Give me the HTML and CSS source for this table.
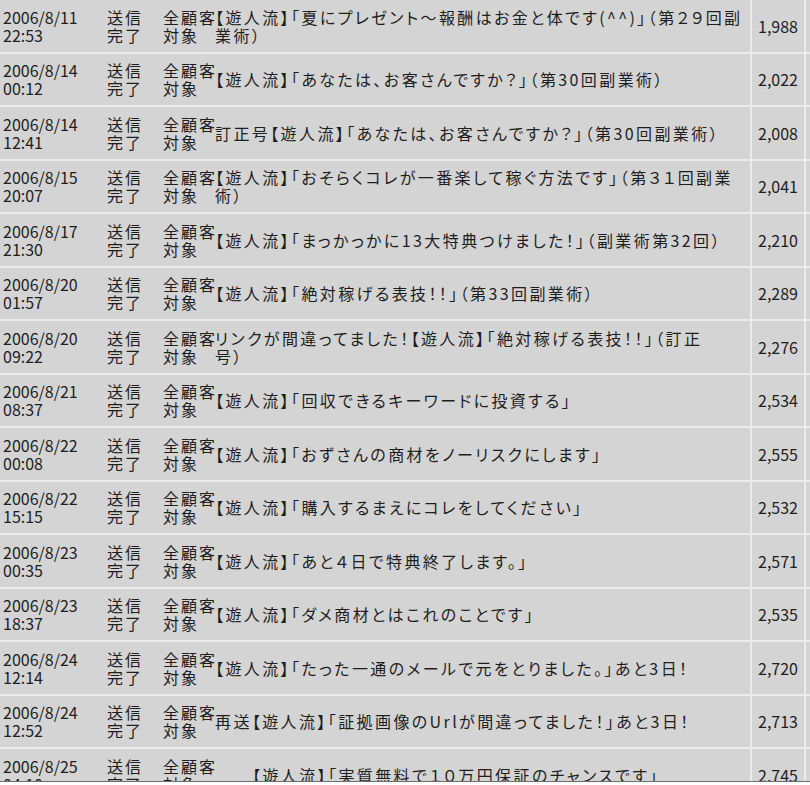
FILE: index.html
```html
<!DOCTYPE html>
<html lang="ja">
<head>
<meta charset="utf-8">
<title>配信履歴</title>
<link rel="stylesheet" href="styles.css">
</head>
<body>
<div class="sheet">
  <div class="list">
    <div class="row"><div class="c date">2006/8/11<br>22:53</div><div class="c st">送信<br>完了</div><div class="c tg">全顧客<br>対象</div><div class="c subj">【遊人流】「夏にプレゼント～報酬はお金と体です(^^)」（第２９回副<br>業術）</div><div class="c num">1,988</div></div>
    <div class="row"><div class="c date">2006/8/14<br>00:12</div><div class="c st">送信<br>完了</div><div class="c tg">全顧客<br>対象</div><div class="c subj">【遊人流】「あなたは、お客さんですか？」（第30回副業術）</div><div class="c num">2,022</div></div>
    <div class="row"><div class="c date">2006/8/14<br>12:41</div><div class="c st">送信<br>完了</div><div class="c tg">全顧客<br>対象</div><div class="c subj">訂正号【遊人流】「あなたは、お客さんですか？」（第30回副業術）</div><div class="c num">2,008</div></div>
    <div class="row"><div class="c date">2006/8/15<br>20:07</div><div class="c st">送信<br>完了</div><div class="c tg">全顧客<br>対象</div><div class="c subj">【遊人流】「おそらくコレが一番楽して稼ぐ方法です」（第３１回副業<br>術）</div><div class="c num">2,041</div></div>
    <div class="row"><div class="c date">2006/8/17<br>21:30</div><div class="c st">送信<br>完了</div><div class="c tg">全顧客<br>対象</div><div class="c subj">【遊人流】「まっかっかに13大特典つけました！」（副業術第32回）</div><div class="c num">2,210</div></div>
    <div class="row"><div class="c date">2006/8/20<br>01:57</div><div class="c st">送信<br>完了</div><div class="c tg">全顧客<br>対象</div><div class="c subj">【遊人流】「絶対稼げる表技！！」（第33回副業術）</div><div class="c num">2,289</div></div>
    <div class="row"><div class="c date">2006/8/20<br>09:22</div><div class="c st">送信<br>完了</div><div class="c tg">全顧客<br>対象</div><div class="c subj">リンクが間違ってました！【遊人流】「絶対稼げる表技！！」（訂正<br>号）</div><div class="c num">2,276</div></div>
    <div class="row"><div class="c date">2006/8/21<br>08:37</div><div class="c st">送信<br>完了</div><div class="c tg">全顧客<br>対象</div><div class="c subj">【遊人流】「回収できるキーワードに投資する」</div><div class="c num">2,534</div></div>
    <div class="row"><div class="c date">2006/8/22<br>00:08</div><div class="c st">送信<br>完了</div><div class="c tg">全顧客<br>対象</div><div class="c subj">【遊人流】「おずさんの商材をノーリスクにします」</div><div class="c num">2,555</div></div>
    <div class="row"><div class="c date">2006/8/22<br>15:15</div><div class="c st">送信<br>完了</div><div class="c tg">全顧客<br>対象</div><div class="c subj">【遊人流】「購入するまえにコレをしてください」</div><div class="c num">2,532</div></div>
    <div class="row"><div class="c date">2006/8/23<br>00:35</div><div class="c st">送信<br>完了</div><div class="c tg">全顧客<br>対象</div><div class="c subj">【遊人流】「あと４日で特典終了します。」</div><div class="c num">2,571</div></div>
    <div class="row"><div class="c date">2006/8/23<br>18:37</div><div class="c st">送信<br>完了</div><div class="c tg">全顧客<br>対象</div><div class="c subj">【遊人流】「ダメ商材とはこれのことです」</div><div class="c num">2,535</div></div>
    <div class="row"><div class="c date">2006/8/24<br>12:14</div><div class="c st">送信<br>完了</div><div class="c tg">全顧客<br>対象</div><div class="c subj">【遊人流】「たった一通のメールで元をとりました。」あと3日！</div><div class="c num">2,720</div></div>
    <div class="row"><div class="c date">2006/8/24<br>12:52</div><div class="c st">送信<br>完了</div><div class="c tg">全顧客<br>対象</div><div class="c subj">再送【遊人流】「証拠画像のUrlが間違ってました！」あと3日！</div><div class="c num">2,713</div></div>
    <div class="row"><div class="c date">2006/8/25<br>04:10</div><div class="c st">送信<br>完了</div><div class="c tg">全顧客<br>対象</div><div class="c subj indent">【遊人流】「実質無料で１０万円保証のチャンスです」</div><div class="c num">2,745</div></div>
  </div>
</div>
</body>
</html>
```
FILE: styles.css
```css
html, body {
  margin: 0;
  padding: 0;
  background: #ffffff;
}
body {
  font-family: "Noto Sans CJK JP", "Noto Sans", sans-serif;
  font-size: 16px;
  line-height: 18px;
  color: #1e1e1e;
}
.sheet {
  width: 810px;
  height: 781px;
  overflow: hidden;
  border-bottom: 1px solid #707070;
  background: #d4d4d4;
}
.list {
  display: flex;
  flex-direction: column;
}
.row {
  display: grid;
  grid-template-columns: 104px 56px 54px 536px 56px 4px;
  height: 51.5px;
  border-bottom: 2px solid #ececec;
}
.c {
  display: flex;
  flex-direction: column;
  justify-content: center;
  white-space: nowrap;
}
.date {
  padding-left: 3px;
}
.st {
  padding-left: 3px;
  letter-spacing: 2px;
}
.tg {
  padding-left: 3px;
  letter-spacing: 2px;
}
.subj {
  display: block;
  align-self: center;
  padding-left: 1px;
  font-feature-settings: "palt";
  text-spacing-trim: space-all;
  letter-spacing: 2.4px;
}
.subj.indent {
  padding-left: 38px;
}
.num {
  align-items: flex-end;
  padding-right: 6px;
  border-left: 2px solid #ececec;
  border-right: 2px solid #ececec;
}
```
